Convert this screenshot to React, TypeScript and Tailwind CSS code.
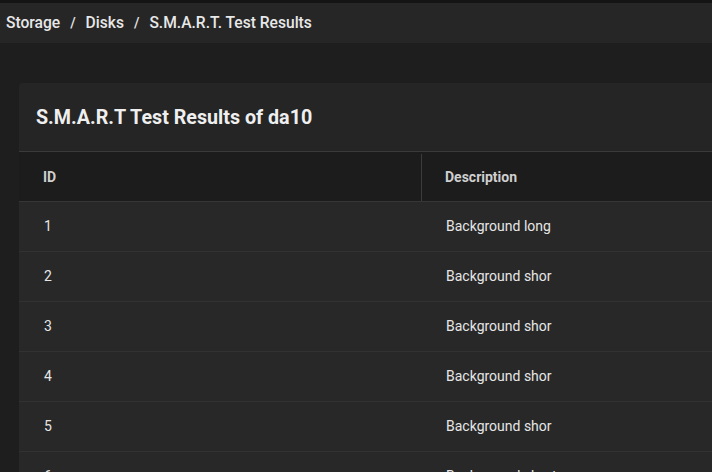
export default function App() {
  const rows = [
    { id: 1, d: "Background long" },
    { id: 2, d: "Background shor" },
    { id: 3, d: "Background shor" },
    { id: 4, d: "Background shor" },
    { id: 5, d: "Background shor" },
    { id: 6, d: "Background short" },
  ];

  return (
    <div className="w-[712px] h-[472px] overflow-hidden bg-[#1e1e1e] font-['Roboto',sans-serif]">
      {/* Breadcrumb bar */}
      <div className="border-t-[3px] border-[#141414] bg-[#262626] h-[43px] flex items-center px-[6px] pt-[1px] text-[15.6px] font-medium text-[#e8e8e8]">
        <span>Storage</span>
        <span className="mx-[10px] text-[14px]">/</span>
        <span>Disks</span>
        <span className="mx-[10px] text-[14px]">/</span>
        <span>S.M.A.R.T. Test Results</span>
      </div>

      <div className="pl-[19px] pt-[40px]">
        <div className="w-[720px] rounded-tl-[4px] bg-[#252525] overflow-hidden">
          <div className="h-[69px] flex items-center px-[17px] pt-[2px] border-b border-[#3a3a3a]">
            <h1 className="text-[19.7px] font-bold text-[#efefef]">S.M.A.R.T Test Results of da10</h1>
          </div>
          <div className="grid grid-cols-[403px_1fr] bg-[#1c1c1c] h-[50px] pt-[2px] text-[14px] font-bold text-[#cfcfcf] border-b border-[#363636]">
            <div className="flex items-center pl-[24px] border-r border-[#3c3c3c]">ID</div>
            <div className="flex items-center pl-[23px]">Description</div>
          </div>
          {rows.map((r) => (
            <div key={r.id} className="grid grid-cols-[403px_1fr] h-[50px] bg-[#282828] border-b border-[#323232] text-[14px] text-[#e6e6e6]">
              <div className="flex items-center pl-[25px]">{r.id}</div>
              <div className="flex items-center pl-[24px]">{r.d}</div>
            </div>
          ))}
        </div>
      </div>
    </div>
  );
}
